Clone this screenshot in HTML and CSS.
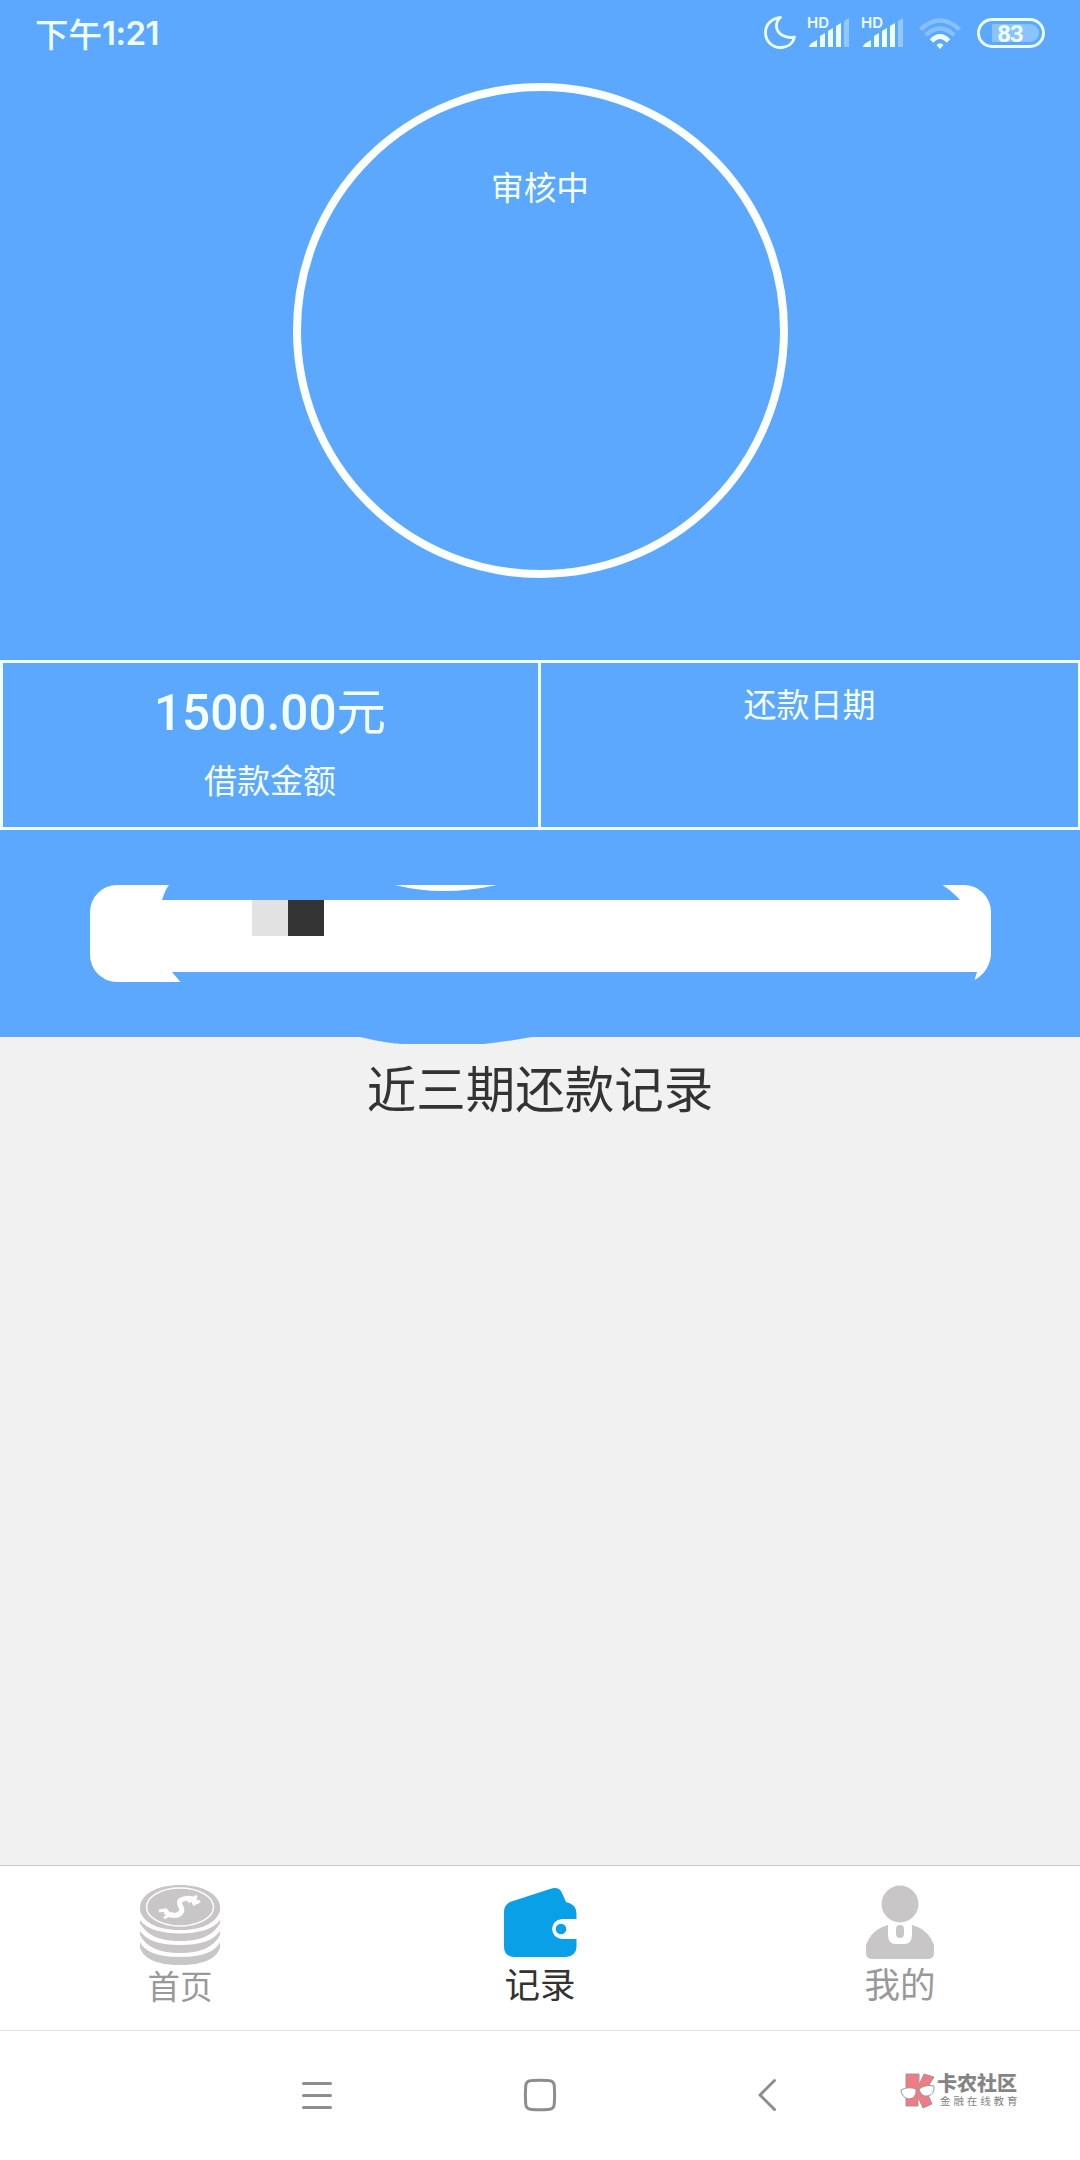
FILE: index.html
```html
<!DOCTYPE html>
<html lang="zh-CN">
<head>
<meta charset="utf-8">
<title>记录</title>
<link rel="stylesheet" href="styles.css">
</head>
<body>
<div class="app">
  <section class="hero">
    <header class="status">
      <div class="time">下午<span class="clock">1:21</span></div>
      <svg class="status-icons" width="284" height="40" viewBox="760 12 284 40">
        <path d="M780.5 17.5C771 18.500 765.500 25 765.500 32.500C765.500 41 772 47.500 780.500 47.500C787.500 47.500 793 43.500 794.500 37C786 39 777.500 34.500 776.500 27C776 23 777.500 20 780.500 17.500Z" fill="none" stroke="#eff" stroke-width="2.800" stroke-linejoin="round"/>
        <g id="signal">
          <text x="807" y="28" class="hd">HD</text>
          <path d="M809 47Q809 45 811 43.500L817 40V47ZM820 36L825 33V47H820ZM828 31L833 28V47H828ZM836 26L841 23V47H836Z" fill="#eff"/>
          <path d="M844 21L849 18V47H844Z" fill="#93c8ff"/>
        </g>
        <use href="#signal" x="54"/>
        <g fill="none" stroke-width="4.500">
          <path d="M920.500 29.500Q940 11.500 959.500 29.500" stroke="#86c0ff"/>
          <path d="M926 35Q940 22 954 35" stroke="#86c0ff"/>
          <path d="M931.500 41Q940 32 948.500 41" stroke="#eff" stroke-width="5"/>
        </g>
        <path d="M936.500 45Q940 41.500 943.500 45L940 49Z" fill="#eff"/>
        <path d="M992 24H1030A9 9 0 0 1 1030 42H992Z" fill="#8bc3ff"/>
        <rect x="978.500" y="19.500" width="65" height="27" rx="13.500" fill="none" stroke="#eff" stroke-width="2.900"/>
        <text x="1010" y="41.500" text-anchor="middle" class="battery">83</text>
      </svg>
    </header>
    <div class="ring">审核中</div>
    <div class="stats">
      <div class="stat">
        <div class="amount">1500.00<span class="unit">元</span></div>
        <div class="label">借款金额</div>
      </div>
      <div class="stat"><div class="label">还款日期</div></div>
    </div>
    <svg class="action" width="901" height="97" viewBox="90 885 901 97">
      <path d="M117 885H169Q165 890 162 900H960Q953 892 942.500 885H964A27 27 0 0 1 991 912V955Q989 972 974.500 980L977 972H172L180.500 982H117A27 27 0 0 1 90 955V912A27 27 0 0 1 117 885Z" fill="#fff"/>
      <path d="M395 885H497Q442 897 395 885Z" fill="#fff"/>
      <path d="M252 900H288V936H252Z" fill="#e2e2e2"/>
      <path d="M288 900H324V936H288Z" fill="#333"/>
    </svg>
    <svg class="bulge" width="180" height="7" viewBox="0 0 180 7"><path d="M0 0Q25 6 42 7H124Q143 5 172 0Z" fill="#5ca8ff"/></svg>
  </section>
  <main class="records"><h1 class="title">近三期还款记录</h1></main>
  <nav class="tabs">
    <div class="tab">
      <svg class="icon" width="80" height="80" viewBox="0 0 80 80">
        <g fill="#c8c6c7">
          <path d="M0 57Q6 71.500 40 72Q74 71.500 80 57V63Q74 80 40 80Q6 80 0 63Z"/>
          <path d="M0 46Q9 60 40 60Q71 60 80 46V50Q71 68 40 68Q9 68 0 50Z"/>
          <path d="M0 35Q9 48 40 48.500Q71 48 80 35V38Q71 56 40 56Q9 56 0 38Z"/>
          <path d="M0 22C1 9 17 0 40 0S79 9 80 22V26C76 38 62 45 40 45S4 38 0 26Z"/>
        </g>
        <ellipse cx="40" cy="22" rx="33.500" ry="19" fill="none" stroke="#fff" stroke-width="1.500"/>
        <path d="M56 19C56 13 48 12 42 14.500C35 18 45 23 41 27.500C37 32 27 31 26 26" fill="none" stroke="#fff" stroke-width="5"/>
        <path d="M19 26L26 25L29 31M51 13L54 19L60 16M24 33L33 28M48 17L57 11" fill="none" stroke="#fff" stroke-width="3"/>
      </svg>
      <span class="tab-name small">首页</span>
    </div>
    <div class="tab active">
      <svg class="icon" width="80" height="80" viewBox="0 0 80 80">
        <path d="M10 17L50 4Q59 1 62 8L66 17Q76 19 76.500 28V34H62Q53 35 52 44Q53 53 62 54H76.500V62Q76 71 66 72H14Q4 71 4 62V27Q4 20 10 17Z" fill="#0aa0e8"/>
        <circle cx="61" cy="44" r="5.300" fill="#0aa0e8"/>
      </svg>
      <span class="tab-name">记录</span>
    </div>
    <div class="tab">
      <svg class="icon" width="80" height="80" viewBox="0 0 80 80">
        <g fill="#c8c6c7"><circle cx="40" cy="19" r="18.500"/>
        <path d="M28 40V50Q28 59 36 59H44Q52 59 52 50V40Q68 44 74 60V68Q74 74 67 74H13Q6 74 6 68V60Q12 44 28 40Z"/>
        <rect x="36" y="40" width="8" height="13" rx="4"/></g>
      </svg>
      <span class="tab-name">我的</span>
    </div>
  </nav>
  <footer class="sysbar">
    <svg width="30" height="34" viewBox="0 0 30 34"><path d="M1.500 5.500H28.500M1.500 17.500H28.500M1.500 29.500H28.500" class="line"/></svg>
    <svg width="34" height="34" viewBox="0 0 34 34"><path d="M9 2.500Q17 1.800 25 2.500Q31 2.500 31.300 8Q32 17 31.300 26Q31 31.500 25 31.500Q17 32.200 9 31.500Q3 31.500 2.700 26Q2 17 2.700 8Q3 2.500 9 2.500Z" class="line"/></svg>
    <svg width="20" height="34" viewBox="0 0 20 34"><path d="M17.500 2.500L3 17L17.500 31.500" class="line"/></svg>
    <div class="brand">
      <svg width="36" height="38" viewBox="0 0 36 38">
        <path d="M6 2H19V13L24 2L34 5L26 18L32 32L23 36L18 25V34H6Z" fill="#f17b84" stroke="#999" stroke-width="1"/>
        <path d="M1 18Q8 14 16 17Q17 26 9 27Q2 26 1 18ZM19 17Q26 12 34 14Q35 22 28 24Q21 25 19 17ZM16 18L19 17" fill="#fff" stroke="#999" stroke-width="1"/>
      </svg>
      <div class="brand-text"><b class="brand-name">卡农社区</b><span class="brand-sub">金融在线教育</span></div>
    </div>
  </footer>
</div>
</body>
</html>
```

FILE: styles.css
```css
* { box-sizing: border-box; }
body { margin: 0; font-family: Roboto, "Noto Sans CJK SC", sans-serif; background: #fff; }
svg { display: block; flex: none; }
.app { width: 1080px; height: 2160px; display: flex; flex-direction: column; overflow: hidden; }
.hero { position: relative; height: 1037px; background: #5ca8ff; color: #f4ffff; display: flex; flex-direction: column; align-items: center; }
.status { width: 100%; height: 63px; padding: 0 36px 0 35px; display: flex; justify-content: space-between; align-items: center; flex: none; }
.status-icons { overflow: visible; }
.time { font: 500 33.500px/63px "Noto Sans CJK SC", sans-serif; display: flex; color: #eff; padding-top: 2px; }
.clock { font-family: Inter, sans-serif; font-weight: 600; font-size: 33px; letter-spacing: -.5px; padding-top: 1px; }
.hd { font: 600 15px Inter, sans-serif; fill: #eff; }
.battery { font: 700 24px Roboto, sans-serif; fill: #eff; letter-spacing: -1px; }
.ring { width: 495px; height: 495px; margin-top: 20px; border: 8px solid #fcffff; border-radius: 50%; padding-top: 74px; text-align: center; font-size: 32.700px; line-height: 48px; flex: none; }
.stats { width: 1081px; height: 170px; margin-top: 82px; display: grid; grid-template-columns: 541px 540px; border: 3px solid #f0ffff; flex: none; }
.stat { padding-top: 18px; text-align: center; }
.stat:first-child { width: 538px; border-right: 3px solid #f0ffff; }
.stat:last-child { padding-right: 8px; }
.amount { font-size: 49.500px; font-weight: 500; line-height: 65px; height: 65px; }
.unit { font-weight: 400; }
.label { font-size: 33px; line-height: 50px; }
.amount + .label { margin-top: 11px; }
.action { margin-top: 55px; }
.bulge { position: absolute; left: 360px; top: 100%; }
.records { height: 828px; background: #f1f1f1; padding-top: 20px; }
.title { margin: 0; font-size: 49.500px; line-height: 68px; font-weight: 400; text-align: center; color: #333; }
.tabs { height: 166px; border-top: 1px solid #c8c8c8; border-bottom: 1px solid #e0e0e0; padding: 19px 0 0; display: grid; grid-template-columns: repeat(3, 360px); }
.tab { display: flex; flex-direction: column; align-items: center; color: #999; }
.active { color: #333; }
.tab-name { font-size: 35.500px; line-height: 42px; }
.small { font-size: 32.500px; line-height: 46px; }
.sysbar { height: 129px; display: flex; align-items: center; padding: 0 0 2px 302px; }
.sysbar > svg:nth-child(2) { margin-left: 191px; }
.sysbar > svg:nth-child(3) { margin-left: 200px; }
.line { fill: none; stroke: #8d8d8d; stroke-width: 3; stroke-linecap: round; stroke-linejoin: round; }
.brand { display: flex; margin-left: 123px; margin-top: -7px; align-items: center; }
.brand-text { display: flex; flex-direction: column; color: #858585; margin-left: 1px; }
.brand-name { font-size: 20px; line-height: 22px; font-weight: 900; }
.brand-sub { font-size: 10.500px; line-height: 14px; letter-spacing: 2.900px; margin-left: 3px; white-space: nowrap; }
```
